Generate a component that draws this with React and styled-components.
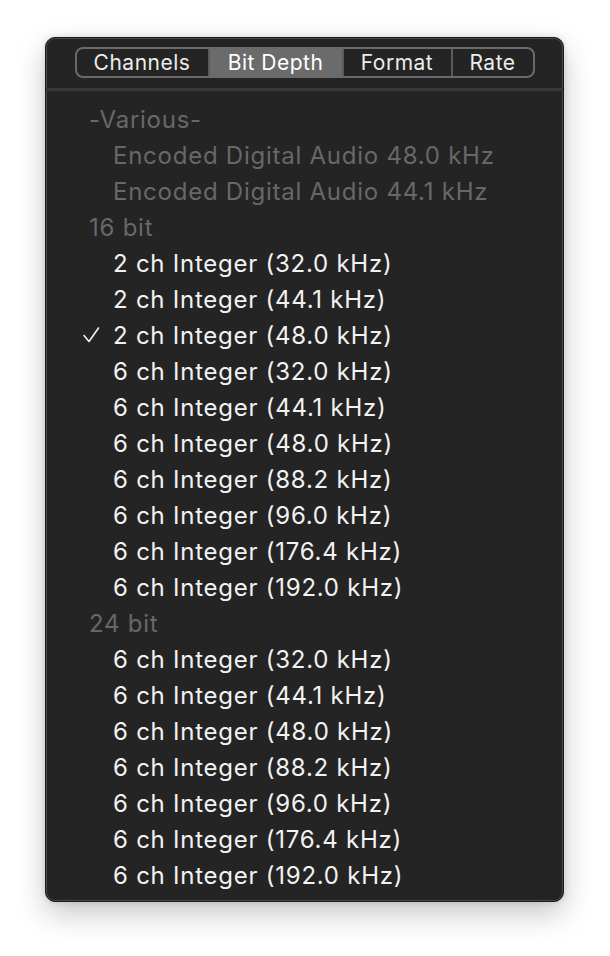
import React from 'react';
import styled, { createGlobalStyle } from 'styled-components';

const GlobalStyle = createGlobalStyle`
  body {
    margin: 0;
    background: #ffffff;
    font-family: Inter, "Noto Sans", sans-serif;
  }
`;

const tabs = ['Channels', 'Bit Depth', 'Format', 'Rate'];
const tabWidths = [131, 132, 107, 80];

const groups = [
  {
    title: '-Various-',
    items: [
      { label: 'Encoded Digital Audio 48.0 kHz', disabled: true },
      { label: 'Encoded Digital Audio 44.1 kHz', disabled: true },
    ],
  },
  {
    title: '16 bit',
    items: [
      { label: '2 ch Integer (32.0 kHz)' },
      { label: '2 ch Integer (44.1 kHz)' },
      { label: '2 ch Integer (48.0 kHz)', checked: true },
      { label: '6 ch Integer (32.0 kHz)' },
      { label: '6 ch Integer (44.1 kHz)' },
      { label: '6 ch Integer (48.0 kHz)' },
      { label: '6 ch Integer (88.2 kHz)' },
      { label: '6 ch Integer (96.0 kHz)' },
      { label: '6 ch Integer (176.4 kHz)' },
      { label: '6 ch Integer (192.0 kHz)' },
    ],
  },
  {
    title: '24 bit',
    items: [
      { label: '6 ch Integer (32.0 kHz)' },
      { label: '6 ch Integer (44.1 kHz)' },
      { label: '6 ch Integer (48.0 kHz)' },
      { label: '6 ch Integer (88.2 kHz)' },
      { label: '6 ch Integer (96.0 kHz)' },
      { label: '6 ch Integer (176.4 kHz)' },
      { label: '6 ch Integer (192.0 kHz)' },
    ],
  },
];

const Check = () => (
  <CheckIcon viewBox="0 0 18 18" width="18" height="18">
    <polyline points="2,9.5 7,15.5 16.5,2" fill="none" stroke="#f2f2f2" strokeWidth="1.6" strokeLinecap="round" strokeLinejoin="round" />
  </CheckIcon>
);

const App = () => (
  <Page>
    <GlobalStyle />
    <Panel>
      <Toolbar>
        <Segmented>
          {tabs.map((t, i) => (
            <Segment key={t} $active={t === 'Bit Depth'} $width={tabWidths[i]}>
              {t}
            </Segment>
          ))}
        </Segmented>
      </Toolbar>
      <List>
        {groups.map((g) => (
          <React.Fragment key={g.title}>
            <GroupTitle>{g.title}</GroupTitle>
            {g.items.map((it, i) => (
              <Item key={i} $disabled={it.disabled}>
                <CheckSlot>{it.checked && <Check />}</CheckSlot>
                {it.label}
              </Item>
            ))}
          </React.Fragment>
        ))}
      </List>
    </Panel>
  </Page>
);

const Page = styled.div`
  padding: 37px 0 0 45px;
  height: 956px;
  box-sizing: border-box;
`;

const Panel = styled.div`
  width: 519px;
  height: 865px;
  box-sizing: border-box;
  background: #242424;
  border: 1px solid #1a1a1a;
  border-radius: 10px;
  box-shadow: inset 0 0 0 1px #4a4a4a, 0 12px 30px rgba(0, 0, 0, 0.22), 0 0 6px rgba(0, 0, 0, 0.12);
  overflow: hidden;
  display: flex;
  flex-direction: column;
`;

const Toolbar = styled.div`
  height: 53px;
  flex-shrink: 0;
  display: flex;
  justify-content: center;
  padding-top: 9px;
  box-sizing: border-box;
  border-bottom: 3px solid #393939;
`;

const Segmented = styled.div`
  display: flex;
  height: 31px;
  box-sizing: border-box;
  border: 2px solid #6a6a6a;
  border-radius: 8px;
  overflow: hidden;
`;

const Segment = styled.div`
  width: ${(p) => p.$width}px;
  display: flex;
  align-items: center;
  justify-content: center;
  font-size: 21px;
  letter-spacing: 0.5px;
  color: ${(p) => (p.$active ? '#ffffff' : '#ececec')};
  background: ${(p) => (p.$active ? '#6b6b6b' : 'transparent')};
  & + & {
    border-left: 2px solid #5a5a5a;
  }
`;

const List = styled.div`
  padding-top: 10px;
  display: flex;
  flex-direction: column;
`;

const Row = styled.div`
  height: 36px;
  display: flex;
  align-items: center;
  font-size: 24px;
  letter-spacing: 0.75px;
  white-space: nowrap;
`;

const GroupTitle = styled(Row)`
  padding-left: 43px;
  color: #686868;
`;

const Item = styled(Row)`
  padding-left: 36px;
  color: ${(p) => (p.$disabled ? '#686868' : '#f2f2f2')};
`;

const CheckSlot = styled.span`
  width: 31px;
  flex-shrink: 0;
  display: flex;
  align-items: center;
`;

const CheckIcon = styled.svg`
  display: block;
`;

export default App;
